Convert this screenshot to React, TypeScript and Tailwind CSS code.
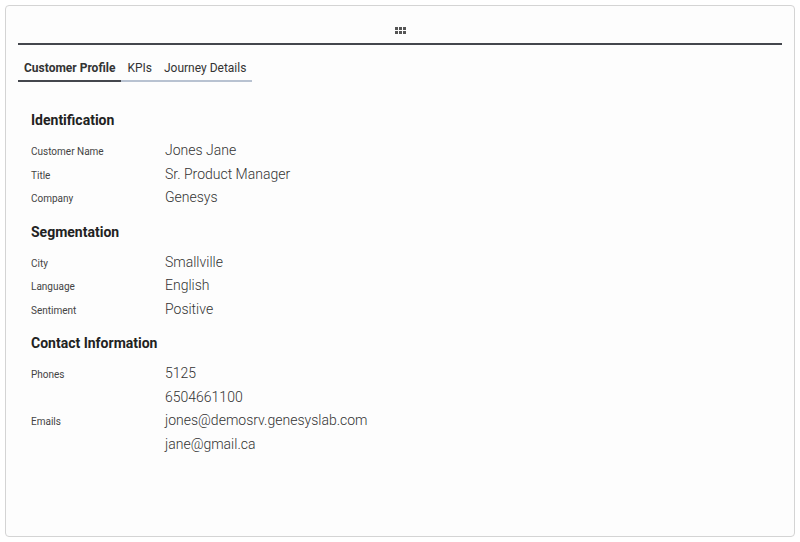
export default function App() {
  const sections = [
    { title: "Identification", rows: [["Customer Name", ["Jones Jane"]], ["Title", ["Sr. Product Manager"]], ["Company", ["Genesys"]]] },
    { title: "Segmentation", rows: [["City", ["Smallville"]], ["Language", ["English"]], ["Sentiment", ["Positive"]]] },
    { title: "Contact Information", rows: [["Phones", ["5125", "6504661100"]], ["Emails", ["jones@demosrv.genesyslab.com", "jane@gmail.ca"]]] },
  ] as const;
  return (
    <div className="w-[800px] h-[542px] bg-white p-[5px] font-[Roboto]">
      <div className="h-[532px] border border-[#d4d4d4] rounded-sm bg-[#fdfdfd] px-[12px]">
        <div className="h-[39px] flex items-end justify-center pb-[9px] border-b-2 border-[#44474d]">
          <div className="grid grid-cols-3 gap-[1px]">
            {Array.from({ length: 6 }).map((_, i) => <span key={i} className="w-[3px] h-[3px] bg-[#555]" />)}
          </div>
        </div>
        <div className="flex mt-[14px] text-[12px] text-[#333]">
          <div className="px-[6px] pb-[3px] font-bold border-b-2 border-[#44474d]">Customer Profile</div>
          <div className="px-[6px] pb-[3px] border-b-2 border-[#b8c2d1]">KPIs</div>
          <div className="px-[6px] pb-[3px] border-b-2 border-[#b8c2d1]">Journey Details</div>
        </div>
        <div className="px-[13px] pt-[28px]">
          {sections.map((s) => (
            <div key={s.title} className="mb-[11px]">
              <h2 className="text-[14px] font-bold text-[#222] mb-[9px]">{s.title}</h2>
              {s.rows.map(([label, vals]) => (
                <div key={label} className="flex">
                  <div className="w-[134px] text-[10px] text-[#444] pt-[4px]">{label}</div>
                  <div>
                    {vals.map((v) => <div key={v} className="text-[14px] font-light text-[#333] h-[23.5px]">{v}</div>)}
                  </div>
                </div>
              ))}
            </div>
          ))}
        </div>
      </div>
    </div>
  );
}
